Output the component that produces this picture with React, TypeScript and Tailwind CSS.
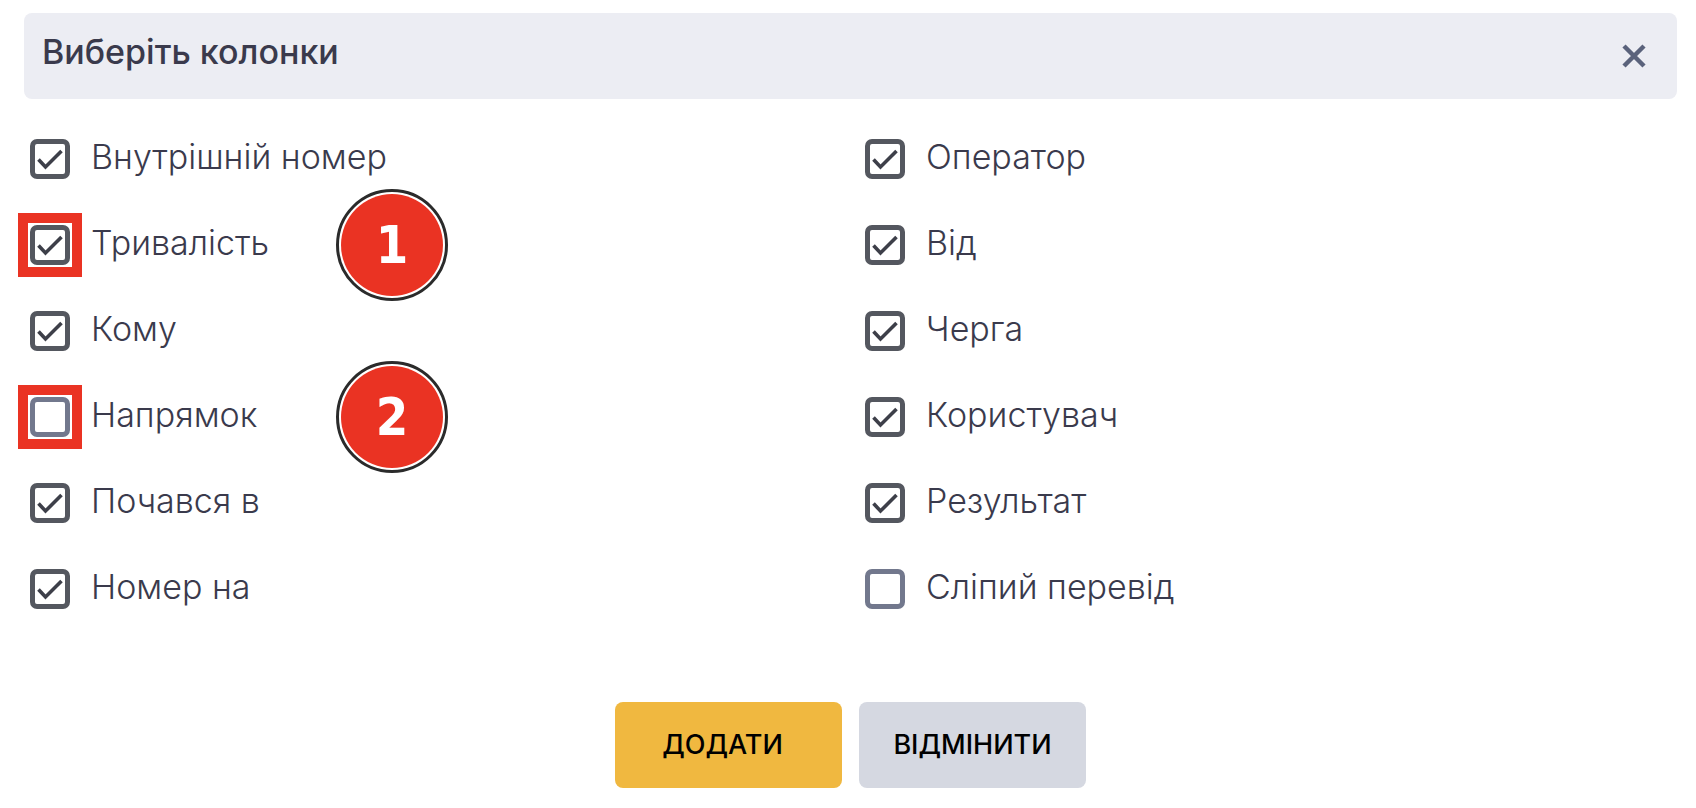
import { useState } from "react";

type Column = {
  id: string;
  label: string;
  checked: boolean;
  step?: number;
};

const LEFT_COLUMNS: Column[] = [
  { id: "extension", label: "Внутрішній номер", checked: true },
  { id: "duration", label: "Тривалість", checked: true, step: 1 },
  { id: "to", label: "Кому", checked: true },
  { id: "direction", label: "Напрямок", checked: false, step: 2 },
  { id: "started", label: "Почався в", checked: true },
  { id: "number-to", label: "Номер на", checked: true },
];

const RIGHT_COLUMNS: Column[] = [
  { id: "operator", label: "Оператор", checked: true },
  { id: "from", label: "Від", checked: true },
  { id: "queue", label: "Черга", checked: true },
  { id: "user", label: "Користувач", checked: true },
  { id: "result", label: "Результат", checked: true },
  { id: "blind-transfer", label: "Сліпий перевід", checked: false },
];

function CloseIcon() {
  return (
    <svg viewBox="0 0 24 24" className="h-6 w-6" fill="none" aria-hidden="true">
      <path d="M2 2 22 22M22 2 2 22" stroke="#5a627b" strokeWidth="4.5" />
    </svg>
  );
}

function CheckMark() {
  return (
    <svg
      viewBox="0 0 40 40"
      className="pointer-events-none absolute inset-0 hidden h-10 w-10 peer-checked:block"
      fill="none"
      aria-hidden="true"
    >
      <path d="M8.5 20.5 15.5 28 31.5 12" stroke="#3d3f49" strokeWidth="3.6" />
    </svg>
  );
}

/** Numbered marker next to a row. */
function StepBadge({ step }: { step: number }) {
  return (
    <span className="absolute left-[306px] top-1/2 flex h-28 w-28 -translate-y-1/2 items-center justify-center rounded-full border-[3px] border-[#2b2b2b] bg-white p-[2px]">
      <span className="flex h-full w-full items-center justify-center rounded-full bg-[#ea3323] font-['DejaVu_Sans_Condensed','DejaVu_Sans',sans-serif] text-[52px] font-bold leading-none text-white">
        {step}
      </span>
    </span>
  );
}

function ColumnRow({ column }: { column: Column }) {
  const [checked, setChecked] = useState(column.checked);

  return (
    <li className="relative flex h-[86px] items-center">
      <span className="relative h-10 w-10 shrink-0">
        {column.step && (
          <span className="absolute -inset-3 border-[10px] border-[#ea3323]" />
        )}
        <input
          id={column.id}
          type="checkbox"
          checked={checked}
          onChange={(e) => setChecked(e.target.checked)}
          className="peer relative block h-10 w-10 appearance-none rounded-[7px] border-[5px] border-[#72788d] bg-white checked:border-[#54575f]"
        />
        <CheckMark />
      </span>
      <label
        htmlFor={column.id}
        className="pb-1 pl-[21px] text-[34px] font-light leading-10"
      >
        {column.label}
      </label>
      {column.step && <StepBadge step={column.step} />}
    </li>
  );
}

export default function App() {
  return (
    <main className="bg-white pt-[13px] font-['Inter',sans-serif] text-[#3a3a4c]">
      <header className="ml-6 mr-[19px] flex h-[86px] items-center justify-between rounded-lg bg-[#ecedf3] pl-[18px] pr-[31px]">
        <h1 className="pb-2 text-[34px] font-medium leading-10">
          Виберіть колонки
        </h1>
        <button type="button" aria-label="Закрити">
          <CloseIcon />
        </button>
      </header>

      <div className="mt-[17px] grid grid-cols-2 gap-x-1 pl-[30px]">
        <ul>
          {LEFT_COLUMNS.map((column) => (
            <ColumnRow key={column.id} column={column} />
          ))}
        </ul>
        <ul>
          {RIGHT_COLUMNS.map((column) => (
            <ColumnRow key={column.id} column={column} />
          ))}
        </ul>
      </div>

      <div className="ml-6 mr-[19px] mt-[70px] flex justify-center gap-[17px] pb-5 text-[27px] font-medium leading-8 text-black">
        <button
          type="button"
          className="h-[86px] w-[227px] rounded-lg bg-[#f0b840] pr-3"
        >
          ДОДАТИ
        </button>
        <button
          type="button"
          className="h-[86px] w-[227px] rounded-lg bg-[#d5d8e1]"
        >
          ВІДМІНИТИ
        </button>
      </div>
    </main>
  );
}
